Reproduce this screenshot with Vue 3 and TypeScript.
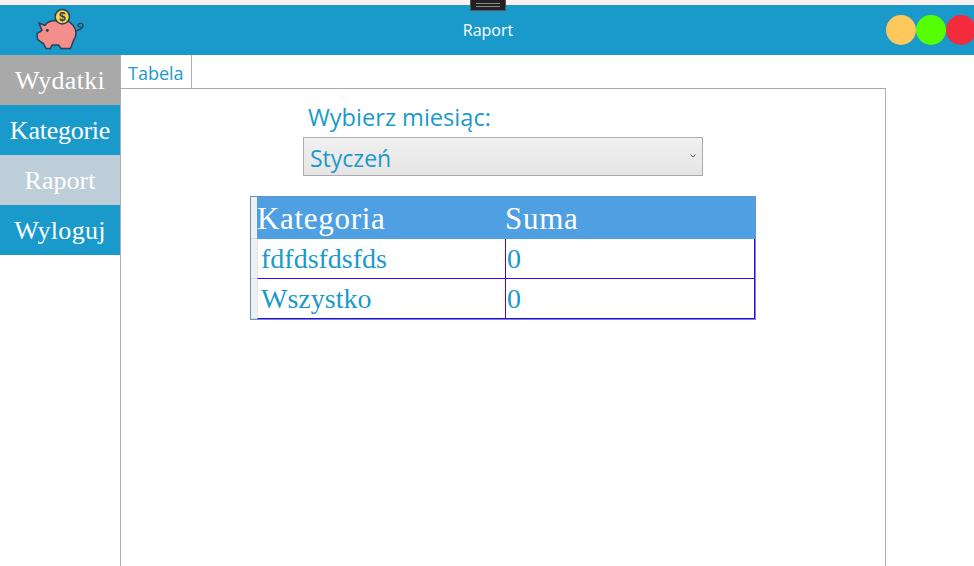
<script setup lang="ts">
const menu: { label: string; cls: string }[] = [
  { label: 'Wydatki', cls: 'grey' },
  { label: 'Kategorie', cls: 'blue tight' },
  { label: 'Raport', cls: 'pale narrow' },
  { label: 'Wyloguj', cls: 'blue' },
]
const rows: [string, string][] = [
  ['fdfdsfdsfds', '0'],
  ['Wszystko', '0'],
]
</script>

<template>
  <div class="window">
    <div class="strip">
      <div class="grip"><i></i><i></i></div>
    </div>
    <header class="header">
      <svg class="pig" width="50" height="44" viewBox="35 8 50 44">
        <path d="M74 31 C78 31 83.500 28 83 25 C82.500 22.500 78 23 78 25.500 C78 27 80 27.500 80.500 26" fill="none" stroke="#23415c" stroke-width="1.300"/>
        <path d="M39 23 L45 25.500 C47 22 51 20.500 56 20.500 L68 21 C72 23 76 28 76 33 C76 36 75 38.500 73.500 40.500 L70.500 48.500 L61 48.500 L58.500 45 L52 45 L50.500 48.500 L46 48.500 L43.500 43.500 C41.500 42.500 40 41.500 38.500 40 L37.500 39.500 L37 33.500 C38.500 32.500 40.500 32 42 30 C41 28 40 26 39 23 Z" fill="#f38e8b" stroke="#23415c" stroke-width="1.500" stroke-linejoin="round"/>
        <circle cx="62.300" cy="16.700" r="7.200" fill="#fdd33f" stroke="#23415c" stroke-width="1.500"/>
        <text x="62.300" y="21" class="dollar">$</text>
        <circle cx="47.300" cy="30.500" r="1.400" fill="#23415c"/>
      </svg>
      <span class="title">Raport</span>
      <div class="lights">
        <span class="light yellow"></span>
        <span class="light green"></span>
        <span class="light red"></span>
      </div>
    </header>
    <div class="body">
      <nav class="side">
        <div v-for="m in menu" :key="m.label" class="item" :class="m.cls">{{ m.label }}</div>
      </nav>
      <main class="main">
        <div class="tab">Tabela</div>
        <section class="panel">
          <div class="form">
            <label class="lbl">Wybierz miesiąc:</label>
            <div class="select">
              <span>Styczeń</span>
              <svg width="6" height="4" viewBox="0 0 6 4"><path d="M0.500 0.500 L3 3 L5.500 0.500" fill="none" stroke="#555" stroke-width="1"/></svg>
            </div>
          </div>
          <div class="grid">
            <div class="rowhead top"></div>
            <div class="hcell">Kategoria</div>
            <div class="hcell">Suma</div>
            <template v-for="r in rows" :key="r[0]">
              <div class="rowhead"></div>
              <div class="cell first">{{ r[0] }}</div>
              <div class="cell second">{{ r[1] }}</div>
            </template>
          </div>
        </section>
      </main>
    </div>
  </div>
</template>

<style>
html, body { margin: 0; background: #fff; overflow: hidden; }
</style>

<style scoped>
.window {
  width: 974px;
  height: 566px;
  overflow: hidden;
  display: flex;
  flex-direction: column;
  font-family: "Open Sans", "Noto Sans", sans-serif;
  background: #fff;
}
.strip {
  height: 5px;
  flex: none;
  background: #f9f0f2;
  display: flex;
  justify-content: center;
  position: relative;
}
.grip {
  position: absolute;
  left: 470px;
  top: 0;
  width: 36px;
  height: 11px;
  box-sizing: border-box;
  background: #222;
  border: 1px solid #555;
  border-top: 0;
  padding: 3px 5px 0;
  z-index: 2;
}
.grip i {
  display: block;
  height: 1px;
  background: #8a8a8a;
  margin-bottom: 2px;
}
.header {
  height: 50px;
  flex: none;
  background: #1a9acb;
  display: flex;
  align-items: center;
  justify-content: center;
  position: relative;
  overflow: hidden;
}
.pig { position: absolute; left: 35px; top: 3px; }
.dollar {
  font: 700 12px "Liberation Sans", sans-serif;
  fill: #23415c;
  text-anchor: middle;
}
.title {
  color: #fff;
  font-size: 16px;
  margin-left: 2px;
}
.lights {
  position: absolute;
  left: 886px;
  top: 10px;
  display: flex;
}
.light { width: 30px; height: 30px; border-radius: 50%; flex: none; }
.yellow { background: #ffc85c; }
.green { background: #55ff00; }
.red { background: #f32c3d; }
.body { flex: 1; display: flex; min-height: 0; }
.side { width: 120px; flex: none; }
.item {
  height: 50px;
  padding-top: 2px;
  box-sizing: border-box;
  display: flex;
  align-items: center;
  justify-content: center;
  color: #fff;
  font-family: "Liberation Serif", serif;
  font-size: 26px;
  letter-spacing: 0.3px;
}
.tight { letter-spacing: -0.25px; }
.narrow { letter-spacing: 0; }
.grey { background: #a9a9a9; }
.blue { background: #1a9acb; }
.pale { background: #bdced8; }
.main {
  flex: none;
  width: 766px;
  margin-right: 88px;
  display: flex;
  flex-direction: column;
  border-left: 1px solid #acacac;
  box-sizing: border-box;
}
.tab {
  width: 71px;
  height: 33px;
  box-sizing: border-box;
  border-right: 1px solid #acacac;
  color: #1a9acb;
  font-size: 18px;
  padding: 6px 0 0 7px;
  line-height: 24px;
}
.panel {
  flex: 1;
  border-top: 1px solid #acacac;
  border-right: 1px solid #acacac;
  position: relative;
}
.form {
  margin-left: 182px;
  width: 400px;
  padding-top: 9px;
}
.lbl {
  display: block;
  color: #1a9acb;
  font-size: 23.600px;
  line-height: 39px;
  padding-left: 5px;
}
.select {
  height: 39px;
  box-sizing: border-box;
  border: 1px solid #acacac;
  background: linear-gradient(#f0f0f0, #e5e5e5);
  color: #1a9acb;
  font-size: 23px;
  padding: 2px 6px 0 6px;
  display: flex;
  align-items: center;
  justify-content: space-between;
}
.select svg { margin-top: -4px; }
.grid {
  margin: 20px 0 0 129px;
  width: 506px;
  height: 124px;
  box-sizing: border-box;
  border: 1px solid #6a93c0;
  display: grid;
  grid-template-columns: 6px 248px 1fr;
  grid-template-rows: 42px 40px 40px;
  font-family: "Liberation Serif", serif;
}
.rowhead {
  background: #f0f0f0;
  border-bottom: 1px solid #d8d8d8;
}
.hcell {
  background: #4f9fe3;
  color: #fff;
  font-size: 31px;
  letter-spacing: 0.7px;
  line-height: 44px;
}
.cell {
  color: #1a9acb;
  font-size: 28px;
  line-height: 39px;
  border-bottom: 1px solid #3700ff;
  box-sizing: border-box;
}
.first { letter-spacing: 0; padding-left: 3px; border-left: 1px solid #e3e3e3; }
.second { border-left: 1px solid #3700ff; border-right: 1px solid #3700ff; padding-left: 1px; }
</style>
